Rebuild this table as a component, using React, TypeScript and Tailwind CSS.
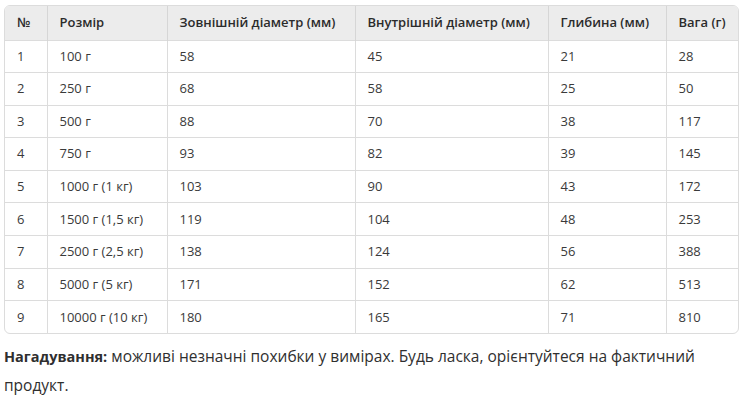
// Jar sizes table with a short reminder under it.
const rows: [string, string, string, string, string, string][] = [
  ["1", "100 г", "58", "45", "21", "28"],
  ["2", "250 г", "68", "58", "25", "50"],
  ["3", "500 г", "88", "70", "38", "117"],
  ["4", "750 г", "93", "82", "39", "145"],
  ["5", "1000 г (1 кг)", "103", "90", "43", "172"],
  ["6", "1500 г (1,5 кг)", "119", "104", "48", "253"],
  ["7", "2500 г (2,5 кг)", "138", "124", "56", "388"],
  ["8", "5000 г (5 кг)", "171", "152", "62", "513"],
  ["9", "10000 г (10 кг)", "180", "165", "71", "810"],
];

const headers = [
  "№",
  "Розмір",
  "Зовнішній діаметр (мм)",
  "Внутрішній діаметр (мм)",
  "Глибина (мм)",
  "Вага (г)",
];

const widths = ["w-[42px]", "w-[120px]", "w-[188px]", "w-[193px]", "w-[118px]", "w-[74px]"];

export default function App() {
  return (
    <div
      className="bg-white px-[4px] pt-[5px] text-[#333]"
      style={{ fontFamily: '"Open Sans", "Noto Sans", sans-serif' }}
    >
      <div className="w-[735px] overflow-hidden rounded-[6px] border border-[#dcdcdc]">
        <table className="w-full table-fixed border-collapse text-[13px]">
          <thead>
            <tr className="h-[34px] bg-[#ececec]">
              {headers.map((h, i) => (
                <th
                  key={h}
                  className={
                    widths[i] +
                    " border-l border-[#d6d6d6] px-[12px] text-left font-semibold text-[#2b2b2b] first:border-l-0"
                  }
                >
                  {h}
                </th>
              ))}
            </tr>
          </thead>
          <tbody>
            {rows.map((r) => (
              <tr key={r[0]} className="h-[32.6px] border-t border-[#dcdcdc]">
                {r.map((c, i) => (
                  <td
                    key={i}
                    className="border-l border-[#dcdcdc] px-[12px] text-[#3a3a3a] first:border-l-0"
                  >
                    {c}
                  </td>
                ))}
              </tr>
            ))}
          </tbody>
        </table>
      </div>
      <p className="mt-[8px] w-[730px] text-[15.5px] leading-[28px] text-[#2f2f2f]">
        <span className="text-[14.5px] font-bold">Нагадування:</span> можливі незначні похибки у
        вимірах. Будь ласка, орієнтуйтеся на фактичний продукт.
      </p>
    </div>
  );
}
